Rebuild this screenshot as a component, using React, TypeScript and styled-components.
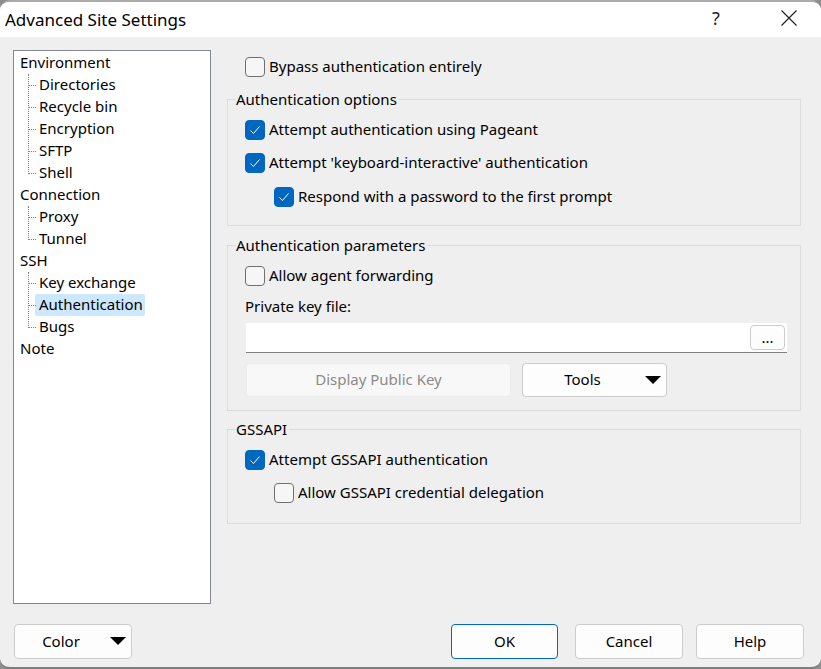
import styled, { createGlobalStyle } from "styled-components";

const GlobalStyle = createGlobalStyle`
  html, body { margin: 0; padding: 0; background: #8d8d8d; }
  body { font-family: "Noto Sans", "Open Sans", sans-serif; font-size: 15px; color: #000; }
  * { box-sizing: border-box; }
`;

const Window = styled.div`
  width: 821px;
  height: 669px;
  display: flex;
  flex-direction: column;
  background: #efefef;
  border-top: 2px solid #ababab;
  border-bottom: 2px solid #7e7e7e;
  border-radius: 10px;
  overflow: hidden;
`;

const TitleBar = styled.header`
  height: 35px;
  flex: none;
  display: flex;
  align-items: center;
  background: #fff;
  padding-left: 5px;
`;

const Title = styled.h1`
  flex: 1;
  margin: 0;
  font-size: 17px;
  font-weight: 400;
`;

const TitleButton = styled.span<{ $gap: number }>`
  width: 46px;
  margin-right: ${(p) => p.$gap}px;
  padding-bottom: 3px;
  display: flex;
  justify-content: center;
  font-size: 18px;
  color: #222;
`;

const Body = styled.div`
  flex: 1;
  display: flex;
  padding: 13px 20px 0 13px;
  gap: 16px;
`;

const Tree = styled.nav`
  width: 198px;
  height: 554px;
  flex: none;
  background: #fff;
  border: 1px solid #828790;
  padding: 1px 0 0 6px;
`;

const TreeRow = styled.div`
  height: 22px;
  line-height: 20px;
  white-space: nowrap;
`;

const ChildList = styled.div`
  position: relative;
  &::before {
    content: "";
    position: absolute;
    left: 8px;
    top: 0;
    bottom: 10px;
    border-left: 1px dotted #808080;
  }
`;

const ChildRow = styled(TreeRow)<{ $selected?: boolean }>`
  position: relative;
  margin-left: 15px;
  padding: 0 2px 0 4px;
  width: fit-content;
  border-radius: 2px;
  background: ${(p) => (p.$selected ? "#cce8ff" : "transparent")};
  &::before {
    content: "";
    position: absolute;
    left: -6px;
    top: 11px;
    width: 7px;
    border-top: 1px dotted #808080;
  }
`;

const Panel = styled.main`
  flex: 1;
  display: flex;
  flex-direction: column;
`;

const Row = styled.label<{ $indent?: number; $height?: number }>`
  display: flex;
  align-items: center;
  gap: 4px;
  height: ${(p) => p.$height ?? 33}px;
  margin-left: ${(p) => p.$indent ?? 0}px;
`;

const Caption = styled.span`
  padding-bottom: 2px;
`;

const Box = styled.span<{ $checked?: boolean }>`
  width: 20px;
  height: 20px;
  flex: none;
  display: flex;
  align-items: center;
  justify-content: center;
  border-radius: 4px;
  background: ${(p) => (p.$checked ? "#0067c0" : "#f6f6f6")};
  border: 1px solid ${(p) => (p.$checked ? "#0067c0" : "#6f6f6f")};
`;

const Check = ({ checked }: { checked?: boolean }) => (
  <Box $checked={checked}>
    {checked && (
      <svg width="12" height="10" viewBox="0 0 12 10">
        <path d="M1.5 5.5 L4.5 8.5 L10.5 1.5" fill="none" stroke="#fff" strokeWidth="1" />
      </svg>
    )}
  </Box>
);

const TopRow = styled.div`
  padding-left: 18px;
  height: 34px;
  display: flex;
  align-items: center;
`;

const Group = styled.fieldset<{ $height: number; $mt: number }>`
  margin: ${(p) => p.$mt}px 0 0;
  padding: 13px 0 0 17px;
  height: ${(p) => p.$height}px;
  border: 1px solid #dcdcdc;
  min-width: 0;
  position: relative;
  display: flex;
  flex-direction: column;
`;

const GroupTitle = styled.span`
  position: absolute;
  top: -10px;
  left: 8px;
  line-height: 18px;
  padding-right: 2px;
  background: #efefef;
`;

const FieldLabel = styled.div`
  height: 31px;
  line-height: 29px;
`;

const KeyField = styled.div`
  width: 541px;
  height: 30px;
  margin-left: 1px;
  display: flex;
  align-items: center;
  justify-content: flex-end;
  padding-right: 2px;
  background: #fff;
  border-bottom: 1px solid #808080;
`;

const ButtonRow = styled.div`
  display: flex;
  gap: 11px;
  margin: 10px 0 0 1px;
`;

const Button = styled.button<{ $width: number; $default?: boolean; $height?: number }>`
  position: relative;
  width: ${(p) => p.$width}px;
  height: ${(p) => p.$height ?? 35}px;
  padding: 0 0 2px;
  font: inherit;
  color: #000;
  background: #fdfdfd;
  border: 1px solid ${(p) => (p.$default ? "#0067c0" : "#cccccc")};
  border-radius: 4px;
  &:disabled {
    color: #8b8b8b;
    background: #f8f8f8;
    border-color: #ececec;
  }
`;

const SplitLabel = styled.span`
  display: block;
  padding-right: 24px;
`;

const Arrow = styled.i`
  position: absolute;
  right: 5px;
  top: 12px;
  width: 0;
  height: 0;
  border-left: 8px solid transparent;
  border-right: 8px solid transparent;
  border-top: 8px solid #000;
`;

const Footer = styled.footer`
  display: flex;
  align-items: center;
  padding: 0 17px 8px 14px;
  gap: 17px;
`;

const Spacer = styled.div`
  flex: 1;
`;

const HelpButton = styled(Button)`
  margin-left: -4px;
`;

export default function App() {
  return (
    <>
      <GlobalStyle />
      <Window>
        <TitleBar>
          <Title>Advanced Site Settings</Title>
          <TitleButton $gap={27}>?</TitleButton>
          <TitleButton $gap={9}>
            <svg width="16" height="16" viewBox="0 0 16 16">
              <path d="M0.5 0.5 L15.5 15.5 M15.5 0.5 L0.5 15.5" stroke="#222" strokeWidth="1.2" fill="none" />
            </svg>
          </TitleButton>
        </TitleBar>
        <Body>
          <Tree>
            <TreeRow>Environment</TreeRow>
            <ChildList>
              <ChildRow>Directories</ChildRow>
              <ChildRow>Recycle bin</ChildRow>
              <ChildRow>Encryption</ChildRow>
              <ChildRow>SFTP</ChildRow>
              <ChildRow>Shell</ChildRow>
            </ChildList>
            <TreeRow>Connection</TreeRow>
            <ChildList>
              <ChildRow>Proxy</ChildRow>
              <ChildRow>Tunnel</ChildRow>
            </ChildList>
            <TreeRow>SSH</TreeRow>
            <ChildList>
              <ChildRow>Key exchange</ChildRow>
              <ChildRow $selected>Authentication</ChildRow>
              <ChildRow>Bugs</ChildRow>
            </ChildList>
            <TreeRow>Note</TreeRow>
          </Tree>
          <Panel>
            <TopRow>
              <Row><Check /><Caption>Bypass authentication entirely</Caption></Row>
            </TopRow>
            <Group $height={127} $mt={15}>
              <GroupTitle>Authentication options</GroupTitle>
              <Row><Check checked /><Caption>Attempt authentication using Pageant</Caption></Row>
              <Row><Check checked /><Caption>Attempt 'keyboard-interactive' authentication</Caption></Row>
              <Row $indent={29} $height={35}><Check checked /><Caption>Respond with a password to the first prompt</Caption></Row>
            </Group>
            <Group $height={166} $mt={19}>
              <GroupTitle>Authentication parameters</GroupTitle>
              <Row><Check /><Caption>Allow agent forwarding</Caption></Row>
              <FieldLabel>Private key file:</FieldLabel>
              <KeyField>
                <Button type="button" $width={35} $height={25}>...</Button>
              </KeyField>
              <ButtonRow>
                <Button type="button" $width={265} $height={34} disabled>Display Public Key</Button>
                <Button type="button" $width={145} $height={34}>
                  <SplitLabel>Tools</SplitLabel>
                  <Arrow />
                </Button>
              </ButtonRow>
            </Group>
            <Group $height={95} $mt={18}>
              <GroupTitle>GSSAPI</GroupTitle>
              <Row><Check checked /><Caption>Attempt GSSAPI authentication</Caption></Row>
              <Row $indent={29}><Check /><Caption>Allow GSSAPI credential delegation</Caption></Row>
            </Group>
          </Panel>
        </Body>
        <Footer>
          <Button type="button" $width={118}>
            <SplitLabel>Color</SplitLabel>
            <Arrow />
          </Button>
          <Spacer />
          <Button type="button" $width={107} $default>OK</Button>
          <Button type="button" $width={108}>Cancel</Button>
          <HelpButton type="button" $width={108}>Help</HelpButton>
        </Footer>
      </Window>
    </>
  );
}
